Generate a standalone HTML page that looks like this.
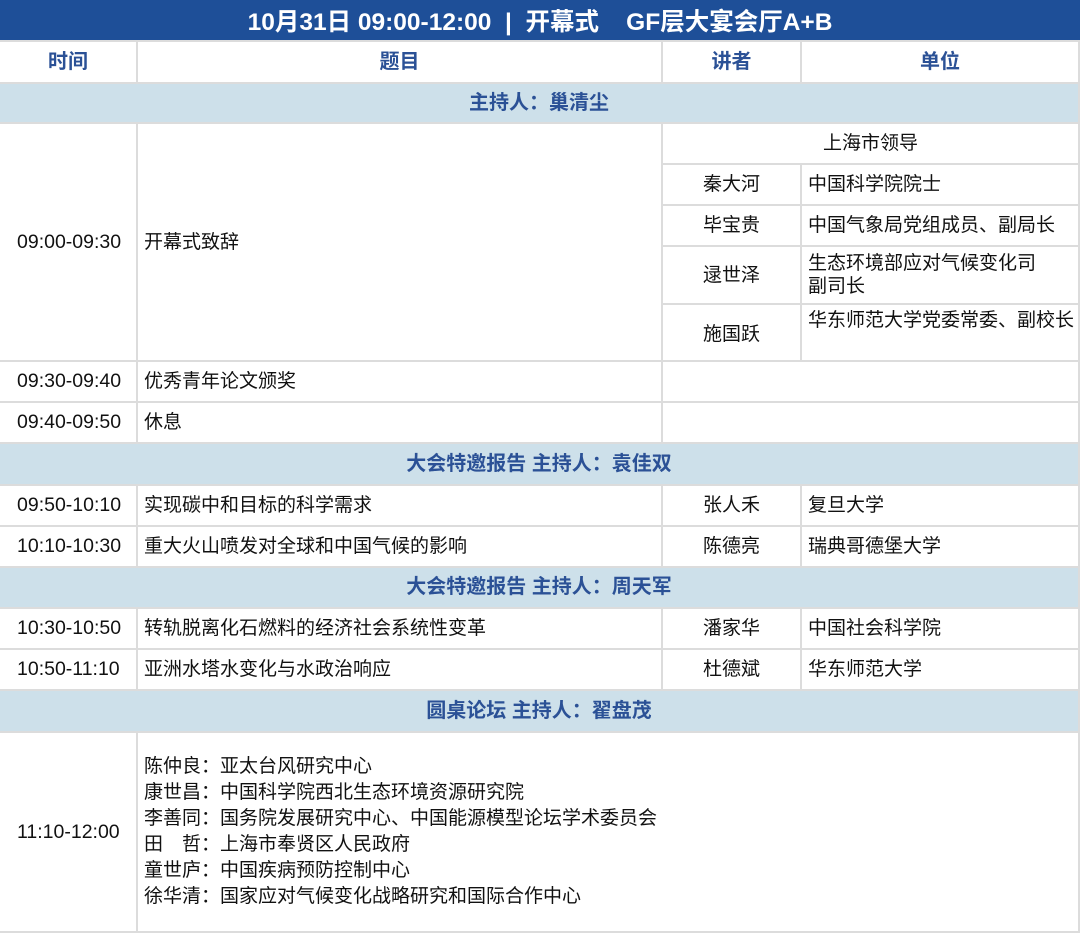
<!DOCTYPE html><html><head><meta charset="utf-8"><style>
*{margin:0;padding:0;box-sizing:border-box}
body{width:1080px;height:930px;background:#fff;position:relative;overflow:hidden;font-family:"Liberation Sans","Noto Sans CJK SC",sans-serif;color:#111;font-size:19px}
.c{position:absolute;border-right:2px solid #dcdcdc;border-bottom:2px solid #dcdcdc;display:flex;align-items:center;padding-left:6px;line-height:23px}
.ctr{justify-content:center;padding-left:0}
.h{color:#2b5196;font-weight:bold;font-size:20px}
.s{background:#cde0ea;color:#2b5196;font-weight:bold;font-size:20px;justify-content:center;padding-left:0}
.t{padding-left:17px;font-size:19.5px}
#top{position:absolute;left:0;top:0;width:1080px;height:42px;background:#1e4f98;color:#fff;font-weight:bold;font-size:24.5px;display:flex;align-items:center;justify-content:center;white-space:pre;border-bottom:2px solid #dcdcdc}
</style></head><body>
<div id="top">10月31日 09:00-12:00  |  开幕式    GF层大宴会厅A+B</div>
<div class="c ctr h" style="left:0;top:42px;width:138px;height:42px">时间</div>
<div class="c ctr h" style="left:138px;top:42px;width:525px;height:42px">题目</div>
<div class="c ctr h" style="left:663px;top:42px;width:139px;height:42px">讲者</div>
<div class="c ctr h" style="left:802px;top:42px;width:278px;height:42px">单位</div>
<div class="c s" style="left:0;top:84px;width:1080px;height:40px">主持人：巢清尘</div>

<div class="c t" style="left:0;top:124px;width:138px;height:238px">09:00-09:30</div>
<div class="c" style="left:138px;top:124px;width:525px;height:238px">开幕式致辞</div>
<div class="c ctr" style="left:663px;top:124px;width:417px;height:41px">上海市领导</div>
<div class="c ctr" style="left:663px;top:165px;width:139px;height:41px">秦大河</div>
<div class="c" style="left:802px;top:165px;width:278px;height:41px">中国科学院院士</div>
<div class="c ctr" style="left:663px;top:206px;width:139px;height:41px">毕宝贵</div>
<div class="c" style="left:802px;top:206px;width:278px;height:41px">中国气象局党组成员、副局长</div>
<div class="c ctr" style="left:663px;top:247px;width:139px;height:58px">逯世泽</div>
<div class="c" style="left:802px;top:247px;width:278px;height:58px">生态环境部应对气候变化司<br>副司长</div>
<div class="c ctr" style="left:663px;top:305px;width:139px;height:57px;padding-top:4px">施国跃</div>
<div class="c" style="left:802px;top:305px;width:278px;height:57px;align-items:flex-start;padding-top:4px">华东师范大学党委常委、副校长</div>

<div class="c t" style="left:0;top:362px;width:138px;height:41px">09:30-09:40</div>
<div class="c" style="left:138px;top:362px;width:525px;height:41px">优秀青年论文颁奖</div>
<div class="c" style="left:663px;top:362px;width:417px;height:41px"></div>
<div class="c t" style="left:0;top:403px;width:138px;height:41px">09:40-09:50</div>
<div class="c" style="left:138px;top:403px;width:525px;height:41px">休息</div>
<div class="c" style="left:663px;top:403px;width:417px;height:41px"></div>

<div class="c s" style="left:0;top:444px;width:1080px;height:42px">大会特邀报告 主持人：袁佳双</div>
<div class="c t" style="left:0;top:486px;width:138px;height:41px">09:50-10:10</div>
<div class="c" style="left:138px;top:486px;width:525px;height:41px">实现碳中和目标的科学需求</div>
<div class="c ctr" style="left:663px;top:486px;width:139px;height:41px">张人禾</div>
<div class="c" style="left:802px;top:486px;width:278px;height:41px">复旦大学</div>
<div class="c t" style="left:0;top:527px;width:138px;height:41px">10:10-10:30</div>
<div class="c" style="left:138px;top:527px;width:525px;height:41px">重大火山喷发对全球和中国气候的影响</div>
<div class="c ctr" style="left:663px;top:527px;width:139px;height:41px">陈德亮</div>
<div class="c" style="left:802px;top:527px;width:278px;height:41px">瑞典哥德堡大学</div>

<div class="c s" style="left:0;top:568px;width:1080px;height:41px">大会特邀报告 主持人：周天军</div>
<div class="c t" style="left:0;top:609px;width:138px;height:41px">10:30-10:50</div>
<div class="c" style="left:138px;top:609px;width:525px;height:41px">转轨脱离化石燃料的经济社会系统性变革</div>
<div class="c ctr" style="left:663px;top:609px;width:139px;height:41px">潘家华</div>
<div class="c" style="left:802px;top:609px;width:278px;height:41px">中国社会科学院</div>
<div class="c t" style="left:0;top:650px;width:138px;height:41px">10:50-11:10</div>
<div class="c" style="left:138px;top:650px;width:525px;height:41px">亚洲水塔水变化与水政治响应</div>
<div class="c ctr" style="left:663px;top:650px;width:139px;height:41px">杜德斌</div>
<div class="c" style="left:802px;top:650px;width:278px;height:41px">华东师范大学</div>

<div class="c s" style="left:0;top:691px;width:1080px;height:42px">圆桌论坛 主持人：翟盘茂</div>
<div class="c t" style="left:0;top:733px;width:138px;height:200px">11:10-12:00</div>
<div class="c" style="left:138px;top:733px;width:942px;height:200px;line-height:26px;padding-top:0">陈仲良：亚太台风研究中心<br>康世昌：中国科学院西北生态环境资源研究院<br>李善同：国务院发展研究中心、中国能源模型论坛学术委员会<br>田　哲：上海市奉贤区人民政府<br>童世庐：中国疾病预防控制中心<br>徐华清：国家应对气候变化战略研究和国际合作中心</div>
</body></html>
